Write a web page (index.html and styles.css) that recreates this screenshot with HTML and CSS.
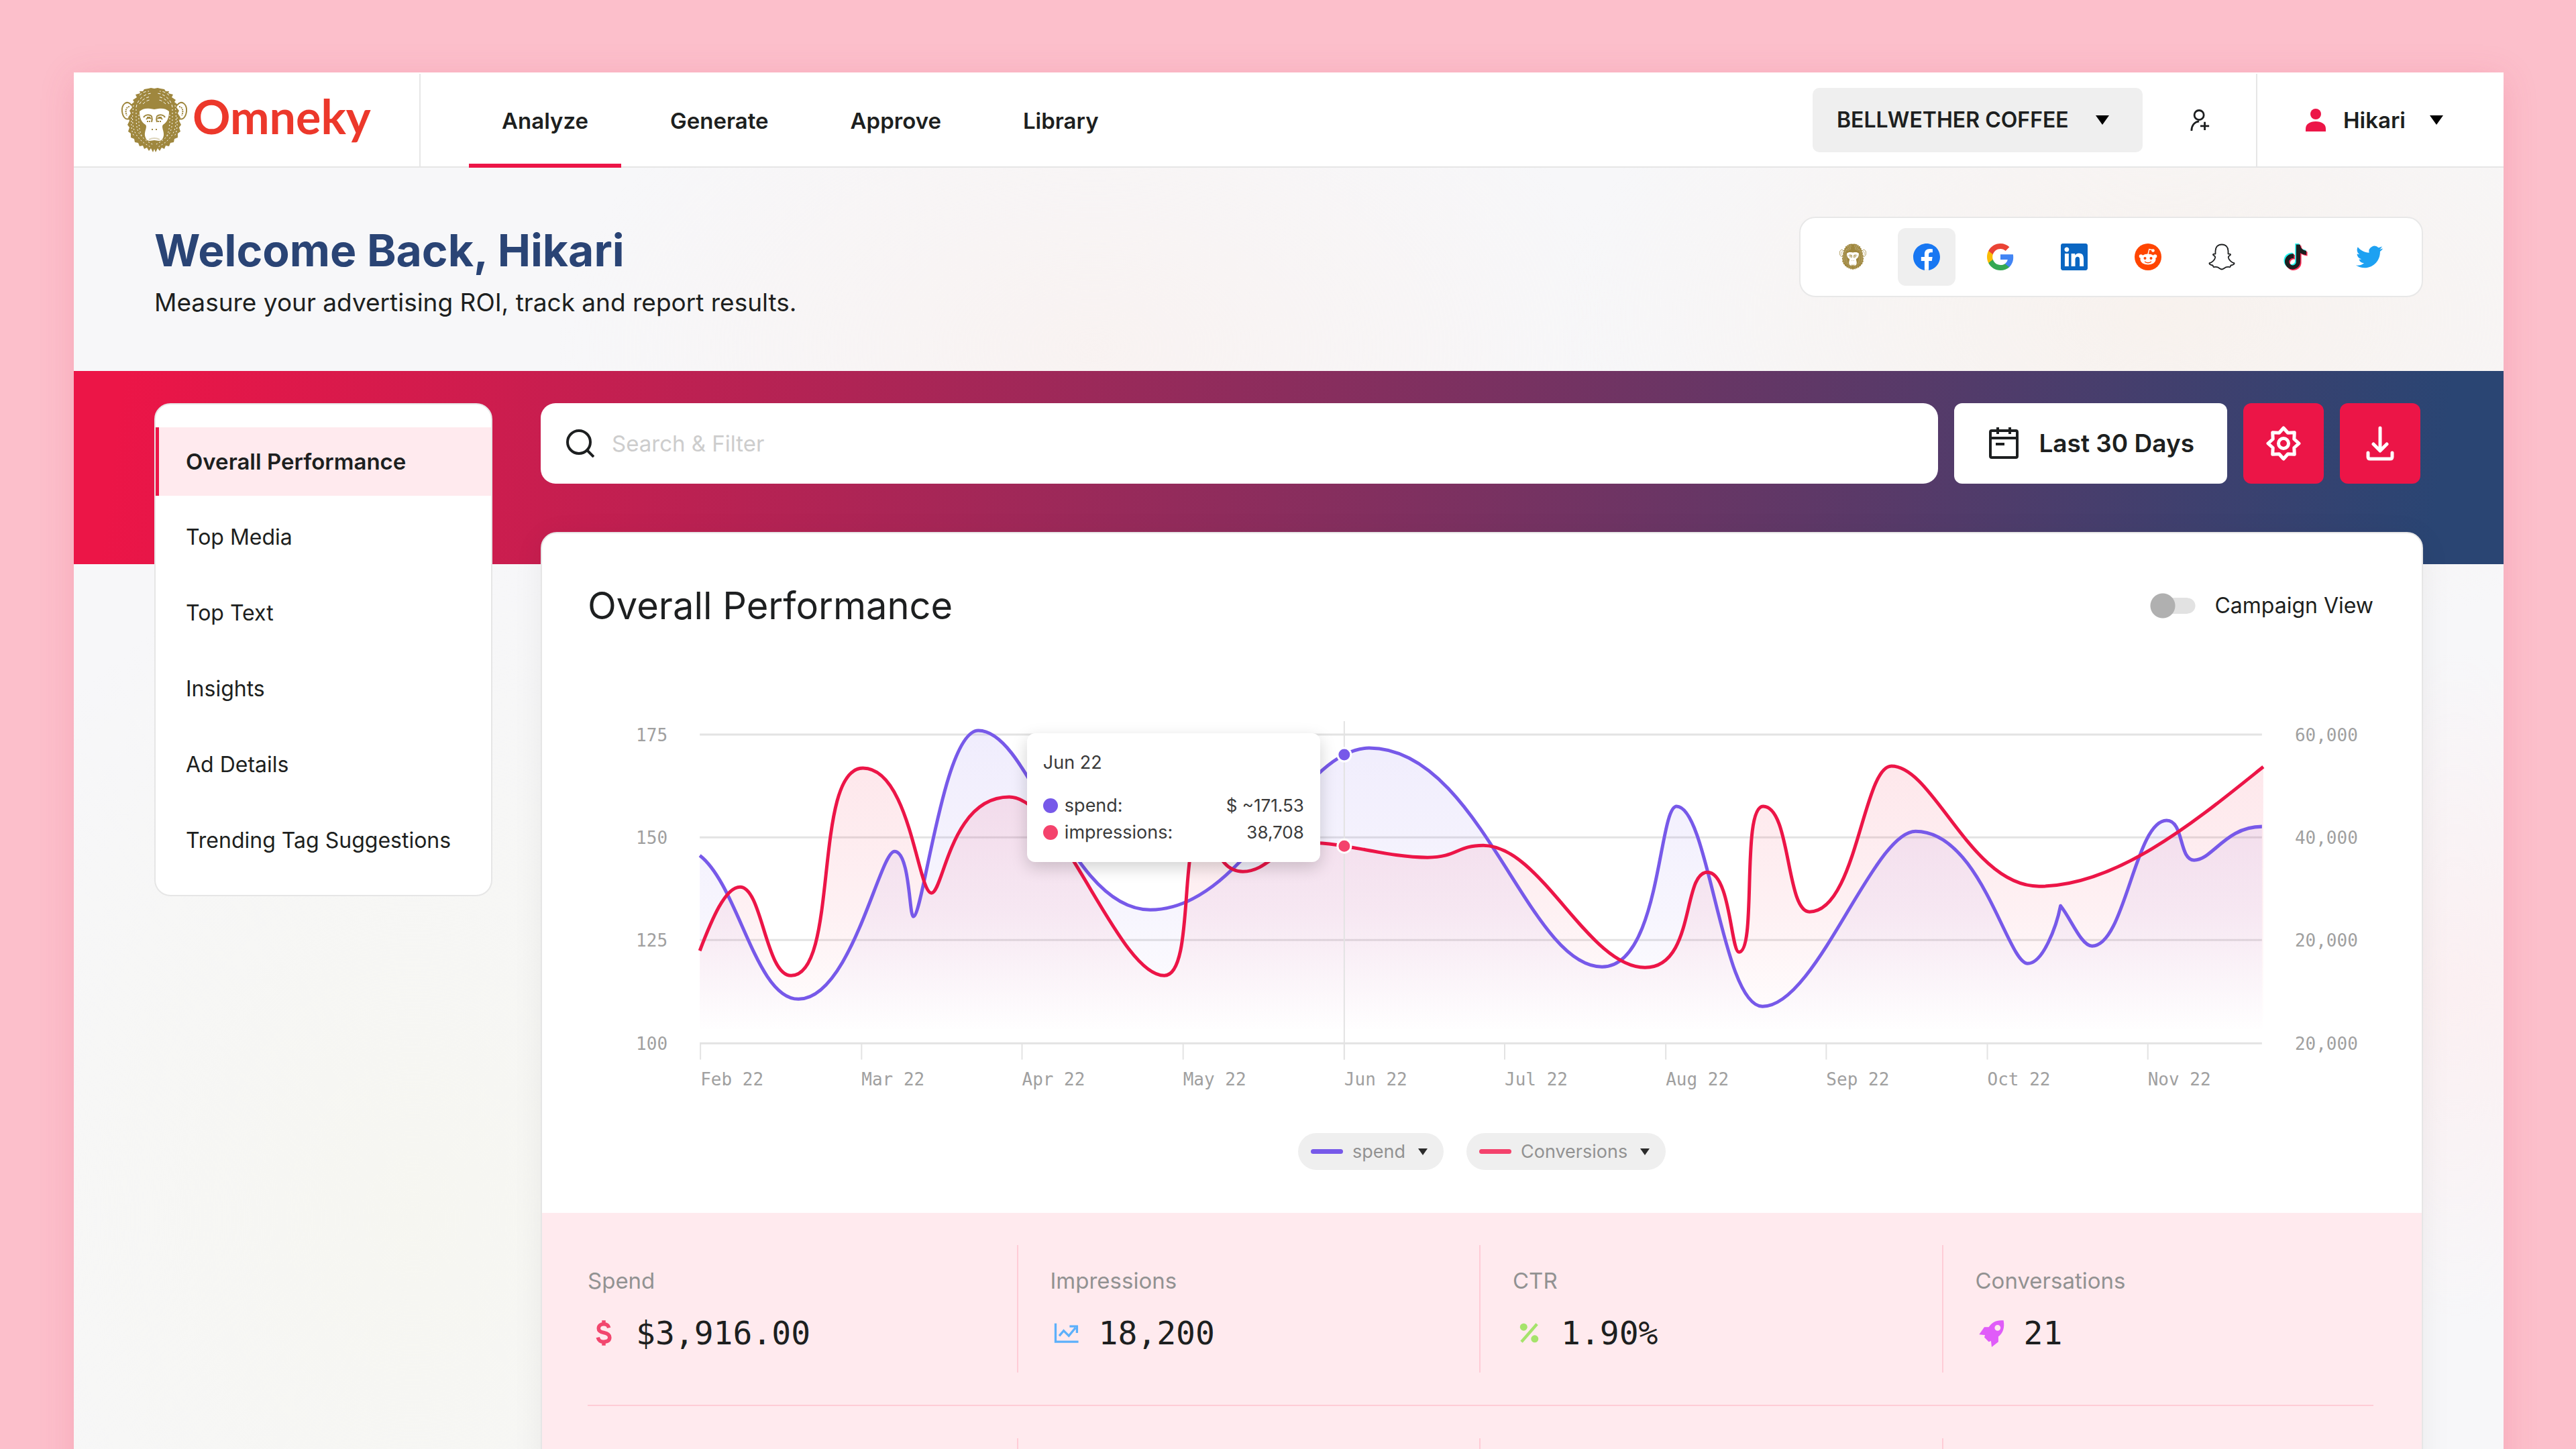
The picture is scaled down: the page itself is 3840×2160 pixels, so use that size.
FILE: index.html
```html
<!DOCTYPE html>
<html lang="en">
<head>
<meta charset="utf-8">
<title>Omneky – Analyze</title>
<link rel="stylesheet" href="styles.css">
</head>
<body>
<svg class="sprite" aria-hidden="true">
  <symbol id="monkey" viewBox="0 0 98 96">
    <g fill="none" stroke="#9f873e">
      <path stroke-width="2" d="M15 26C9 17 0 24 1 35c1 9 6 13 10 11M83 26c6-9 15-2 14 9-1 9-6 13-10 11"/>
      <path stroke-width="2" stroke-dasharray="2 1" d="M12 28c-5 0-7 7-4 13M86 28c5 0 7 7 4 13"/>
    </g>
    <path fill="#9f873e" d="M34 2L40 1 44 0 49 1 54 0 58 1 64 2 66 5 71 5 70 8 77 10 75 14 81 18 79 21 84 25 82 29 86 34 84 38 88 44 86 49 89 55 86 59 88 65 84 68 84 74 79 76 78 81 73 82 71 87 66 86 64 91 60 89 57 94 54 90 51 96 49 91 47 96 44 90 41 94 38 89 34 91 32 86 27 87 25 82 20 81 19 76 14 74 14 68 10 65 12 59 9 55 12 49 10 44 14 38 12 34 16 29 14 25 19 21 17 18 23 14 21 10 28 8 27 5 32 5z"/>
    <g fill="none" stroke="#fff" stroke-width="1">
      <path stroke-dasharray="4 3" d="M22 29C24 16 36 8 46 8M76 29C74 16 62 8 52 8M27 24c4-7 10-10 17-11M71 24c-4-7-10-10-17-11M32 24c4-4 8-6 11-6M66 24c-4-4-8-6-11-6M27 11c4-4 9-6 14-6M71 11c-4-4-9-6-14-6"/>
      <path stroke-dasharray="2 3" d="M18 26c-2 16-3 34 5 45s14 13 20 17M80 26c2 16 3 34-5 45s-14 13-20 17M22 32c0 14-1 30 6 38s14 12 20 15M76 32c0 14 1 30-6 38s-14 12-20 15M26 40c0 10-1 24 6 34M72 40c0 10 1 24-6 34M15 44c0 10-1 20 4 28M83 44c0 10 1 20-4 28"/>
    </g>
    <path fill="#fff" d="M27 35c4-4 10-5 16-4l6 1 6-1c6-1 12 0 16 4 0 8-2 16-9 20-3 3 2 10 1 16-1 5-3 8-7 8l-7-1-7 1c-4 0-6-3-7-8-1-6 4-13 1-16-7-4-9-12-9-20z"/>
    <g fill="none" stroke="#9f873e" stroke-width="2">
      <path d="M33 44c2-4 8-5 12-2M65 44c-2-4-8-5-12-2M37 47c2-3 5-3 7-1M61 47c-2-3-5-3-7-1M45 42c1 3 1 6 0 9M53 42c-1 3-1 6 0 9"/>
      <path d="M38 50l6 0M54 50l6 0" stroke-dasharray="2 1"/>
    </g>
    <path fill="#9f873e" d="M38 43h5v3h-5zM55 43h5v3h-5zM45 61h2v2h-2zM51 61h2v2h-2z"/>
    <path fill="none" stroke="#9f873e" stroke-opacity=".35" stroke-width="2" d="M41 77q8-4 16 0"/>
  </symbol>
  <symbol id="caret" viewBox="0 0 20 14"><path d="M0 0h20L10 14z"/></symbol>
</svg>

<div class="window">
  <header class="topbar">
    <a class="brand" href="#">
      <svg class="brand-mark" aria-hidden="true"><use href="#monkey"/></svg>
      <span>Omneky</span>
    </a>
    <nav class="nav">
      <a class="nav-link is-active" href="#">Analyze</a>
      <a class="nav-link" href="#">Generate</a>
      <a class="nav-link" href="#">Approve</a>
      <a class="nav-link" href="#">Library</a>
    </nav>
    <div class="account">
      <select aria-label="Brand"><option>BELLWETHER COFFEE</option></select>
      <svg class="caret" aria-hidden="true"><use href="#caret"/></svg>
    </div>
    <button class="invite" aria-label="Invite user">
      <svg viewBox="0 0 32 34" fill="none" stroke="#1d1f20" stroke-width="3"><circle cx="14" cy="9" r="7.500"/><path d="M2 34C2 25 7 20 14 19M23 20v13M16 26.500h14"/></svg>
    </button>
    <button class="user">
      <svg class="user-icon" viewBox="0 0 30 34" fill="#ec1547" aria-hidden="true"><circle cx="15" cy="8" r="8"/><path d="M0 34v-4C0 23 6 19 15 19s15 4 15 11v4z"/></svg>
      <span>Hikari</span>
      <svg class="caret" aria-hidden="true"><use href="#caret"/></svg>
    </button>
  </header>

  <section class="hero">
    <div>
      <h1>Welcome Back, Hikari</h1>
      <p>Measure your advertising ROI, track and report results.</p>
    </div>
    <div class="platforms">
      <button class="platform" aria-label="All platforms"><svg><use href="#monkey"/></svg></button>
      <button class="platform is-active" aria-label="Facebook"><svg viewBox="0 0 24 24"><circle cx="12" cy="12" r="11" fill="#fff"/><path fill="#1877f2" d="M24 12.073c0-6.627-5.373-12-12-12s-12 5.373-12 12c0 5.990 4.388 10.954 10.125 11.854v-8.385H7.078v-3.470h3.047V9.430c0-3.007 1.792-4.669 4.533-4.669 1.312 0 2.686.235 2.686.235v2.953H15.830c-1.491 0-1.956.925-1.956 1.874v2.250h3.328l-.532 3.470h-2.796v8.385C19.612 23.027 24 18.062 24 12.073z"/></svg></button>
      <button class="platform" aria-label="Google"><svg viewBox="2 2 44 44"><path fill="#4285f4" d="M45.120 24.500c0-1.560-.14-3.060-.4-4.500H24v8.510h11.840c-.51 2.750-2.060 5.080-4.390 6.640v5.520h7.110c4.160-3.830 6.560-9.470 6.560-16.170z"/><path fill="#34a853" d="M24 46c5.940 0 10.920-1.970 14.560-5.330l-7.110-5.520c-1.970 1.320-4.490 2.100-7.450 2.100-5.730 0-10.580-3.870-12.310-9.070H4.340v5.700C7.960 41.070 15.400 46 24 46z"/><path fill="#fbbc05" d="M11.690 28.180C11.250 26.860 11 25.450 11 24s.25-2.860.69-4.180v-5.700H4.340C2.850 17.090 2 20.450 2 24s.85 6.910 2.340 9.880l7.350-5.700z"/><path fill="#ea4335" d="M24 10.750c3.230 0 6.130 1.110 8.410 3.290l6.310-6.310C34.910 4.180 29.930 2 24 2 15.400 2 7.960 6.930 4.340 14.120l7.350 5.700c1.730-5.200 6.580-9.070 12.310-9.070z"/></svg></button>
      <button class="platform" aria-label="LinkedIn"><svg viewBox="0 0 24 24"><path fill="#0a66c2" d="M20.447 20.452h-3.554v-5.569c0-1.328-.027-3.037-1.852-3.037-1.853 0-2.136 1.445-2.136 2.939v5.667H9.351V9h3.414v1.561h.046c.477-.9 1.637-1.850 3.370-1.850 3.601 0 4.267 2.370 4.267 5.455v6.286zM5.337 7.433c-1.144 0-2.063-.926-2.063-2.065 0-1.138.92-2.063 2.063-2.063 1.140 0 2.064.925 2.064 2.063 0 1.139-.925 2.065-2.064 2.065zm1.782 13.019H3.555V9h3.564v11.452zM22.225 0H1.771C.792 0 0 .774 0 1.729v20.542C0 23.227.792 24 1.771 24h20.451C23.200 24 24 23.227 24 22.271V1.729C24 .774 23.200 0 22.222 0h.003z"/></svg></button>
      <button class="platform" aria-label="Reddit"><svg viewBox="0 0 40 40"><circle cx="20" cy="20" r="20" fill="#ff4500"/><g fill="#fff"><ellipse cx="20" cy="23.500" rx="11.500" ry="8"/><circle cx="9.500" cy="19" r="2.800"/><circle cx="30.500" cy="19" r="2.800"/><circle cx="27.500" cy="10.500" r="2.300"/></g><path fill="none" stroke="#fff" stroke-width="1.400" d="M20 16l1.800-7.500 5 1.200"/><circle cx="15.500" cy="22" r="2" fill="#ff4500"/><circle cx="24.500" cy="22" r="2" fill="#ff4500"/><path fill="none" stroke="#ff4500" stroke-width="1.400" d="M15 27q5 3.500 10 0"/></svg></button>
      <button class="platform" aria-label="Snapchat"><svg viewBox="0 0 40 40"><path fill="none" stroke="#1d1f20" stroke-width="1.800" stroke-linejoin="round" d="M20 1.500c-6 0-9.500 4-9.500 9.500v4.500c-1.500.6-3-.4-3.500.8-.6 1.500 3.500 2 3.300 4.200C9.800 24.500 5 28.500 1.500 29.200c-.6 2 3 3 5 3.300.6.900.3 2 1.300 2.500 1.500.3 3.700-.7 6 .3 2 1 3.500 3.200 6.200 3.200s4.200-2.200 6.200-3.200c2.300-1 4.500 0 6-.3 1-.5.7-1.600 1.300-2.500 2-.3 5.600-1.300 5-3.300-3.500-.7-8.300-4.700-8.800-8.700-.2-2.200 3.900-2.700 3.300-4.200-.5-1.200-2-.2-3.500-.8V11c0-5.500-3.500-9.500-9.500-9.500z"/></svg></button>
      <button class="platform" aria-label="TikTok"><svg viewBox="-1 -1 26 26"><defs><path id="note" d="M12.525.02c1.310-.02 2.610-.01 3.910-.02.08 1.530.63 3.090 1.750 4.170 1.120 1.110 2.700 1.620 4.240 1.790v4.030c-1.440-.05-2.890-.35-4.200-.97-.57-.26-1.100-.59-1.620-.93-.01 2.920.01 5.840-.02 8.750-.08 1.400-.54 2.790-1.350 3.940-1.310 1.920-3.580 3.170-5.910 3.210-1.430.08-2.860-.31-4.080-1.030-2.020-1.190-3.440-3.370-3.650-5.710-.02-.5-.03-1-.01-1.490.18-1.900 1.120-3.720 2.580-4.960 1.660-1.440 3.980-2.130 6.150-1.720.02 1.480-.04 2.960-.04 4.440-.99-.32-2.150-.23-3.020.37-.63.41-1.110 1.040-1.360 1.750-.21.51-.15 1.070-.14 1.610.24 1.640 1.820 3.020 3.500 2.870 1.120-.01 2.190-.66 2.770-1.610.19-.33.4-.67.41-1.060.1-1.790.06-3.570.07-5.360.01-4.030-.01-8.050.02-12.070z"/></defs><use href="#note" x="-1" y="-1" fill="#25f4ee"/><use href="#note" x="1" y="1" fill="#fe2c55"/><use href="#note" fill="#1d1f20"/></svg></button>
      <button class="platform" aria-label="Twitter"><svg viewBox="0 0 24 24"><path fill="#1da1f2" d="M23.953 4.570a10 10 0 01-2.825.775 4.958 4.958 0 002.163-2.723c-.951.555-2.005.959-3.127 1.184a4.920 4.920 0 00-8.384 4.482C7.690 8.095 4.067 6.130 1.640 3.162a4.822 4.822 0 00-.666 2.475c0 1.710.87 3.213 2.188 4.096a4.904 4.904 0 01-2.228-.616v.06a4.923 4.923 0 003.946 4.827 4.996 4.996 0 01-2.212.085 4.936 4.936 0 004.604 3.417 9.867 9.867 0 01-6.102 2.105c-.39 0-.779-.023-1.170-.067a13.995 13.995 0 007.557 2.209c9.053 0 13.998-7.496 13.998-13.985 0-.21 0-.42-.015-.63A9.935 9.935 0 0024 4.590z"/></svg></button>
    </div>
  </section>

  <main class="workspace">
    <nav class="side">
      <a class="side-link is-active" href="#">Overall Performance</a>
      <a class="side-link" href="#">Top Media</a>
      <a class="side-link" href="#">Top Text</a>
      <a class="side-link" href="#">Insights</a>
      <a class="side-link" href="#">Ad Details</a>
      <a class="side-link" href="#">Trending Tag Suggestions</a>
    </nav>

    <div class="content">
      <div class="toolbar">
        <label class="search">
          <svg viewBox="0 0 42 42" fill="none" stroke="#1d1f20" stroke-width="4" aria-hidden="true"><circle cx="19" cy="19" r="17"/><path d="M31 31l10 10"/></svg>
          <input type="search" placeholder="Search &amp; Filter" aria-label="Search and filter">
        </label>
        <button class="range">
          <svg viewBox="0 0 44 48" fill="none" stroke="#1d1f20" stroke-width="4" aria-hidden="true"><rect x="2" y="5" width="40" height="40" rx="2"/><path d="M2 16h40M13 0v10M31 0v10M10 25h13"/></svg>
          Last 30 Days
        </button>
        <button class="tool" aria-label="Settings">
          <svg viewBox="0 0 52 52" fill="none" stroke="#fff" stroke-width="5" stroke-linejoin="round"><path d="M26 3l6.500 7.200 9.800-.500-.5 9.800L49 26l-7.200 6.500.5 9.800-9.800-.5L26 49l-6.500-7.200-9.800.5.5-9.800L3 26l7.200-6.500-.5-9.800 9.800.5z"/><circle cx="26" cy="26" r="7.500"/></svg>
        </button>
        <button class="tool" aria-label="Download">
          <svg viewBox="0 0 52 52" fill="none" stroke="#fff" stroke-width="5" stroke-linecap="round" stroke-linejoin="round"><path d="M26 3v33M16 27l10 10 10-10M8 40v6c0 2 1 3 3 3h30c2 0 3-1 3-3v-6"/></svg>
        </button>
      </div>

      <section class="panel">
        <div class="panel-head">
          <h2>Overall Performance</h2>
          <label class="toggle"><input type="checkbox">Campaign View</label>
        </div>

        <div class="chart">
          <svg class="plot" viewBox="0 0 2660 580" role="img" aria-label="Spend and impressions by month">
            <defs>
              <linearGradient id="fillSpend" gradientUnits="userSpaceOnUse" x1="0" y1="30" x2="0" y2="480"><stop offset="0" stop-color="#7759e9" stop-opacity=".11"/><stop offset=".6" stop-color="#7759e9" stop-opacity=".06"/><stop offset="1" stop-color="#7759e9" stop-opacity="0"/></linearGradient>
              <linearGradient id="fillImpr" gradientUnits="userSpaceOnUse" x1="0" y1="30" x2="0" y2="480"><stop offset="0" stop-color="#f0143c" stop-opacity=".11"/><stop offset=".6" stop-color="#f0143c" stop-opacity=".06"/><stop offset="1" stop-color="#f0143c" stop-opacity="0"/></linearGradient>
              <path id="spend" d="M167 215C225 260 250 429 314 429C392 429 435 209 457 209C480 209 479 306 485 306C500 306 530 29 582 29C660 29 715 296 838 296C980 296 1060 55 1164 55C1330 55 1400 381 1511 381C1598 381 1595 142 1622 142C1670 142 1690 440 1750 440C1830 440 1915 179 1978 179C2075 179 2115 376 2145 376C2168 376 2188 320 2194 290C2210 310 2225 350 2241 350C2290 350 2305 163 2352 163C2378 163 2370 222 2393 222C2420 222 2440 172 2494 172"/>
              <path id="impressions" d="M167 357C185 310 205 262 227 262C260 262 265 394 303 394C375 394 335 85 410 85C480 85 492 271 512 271C530 271 540 128 628 128C705 128 790 394 859 394C905 394 880 180 915 180C935 180 935 239 976 239C1015 239 1030 196 1075 196C1130 196 1190 218 1251 218C1295 218 1295 200 1334 200C1420 200 1490 382 1575 382C1650 382 1630 240 1668 240C1702 240 1703 359 1715 359C1742 359 1718 142 1751 142C1792 142 1785 299 1820 299C1890 299 1900 82 1942 82C2005 82 2060 261 2162 261C2280 261 2400 160 2496 83"/>
              <clipPath id="area"><path d="M167 0H2494V495H167Z"/></clipPath>
            </defs>
            <path class="grid-line" d="M167 35H2494M167 188H2494M167 341H2494M167 495H2494"/>
            <path class="tick" d="M168 495v24M408 495v24M647 495v24M887 495v24M1127 495v24M1366 495v24M1606 495v24M1845 495v24M2085 495v24M2324 495v24"/>
            <g>
              <text x="72" y="45">175</text><text x="72" y="198">150</text><text x="72" y="351">125</text><text x="72" y="505">100</text>
            </g>
            <g>
              <text x="2543" y="45">60,000</text><text x="2543" y="198">40,000</text><text x="2543" y="351">20,000</text><text x="2543" y="505">20,000</text>
            </g>
            <g>
              <text x="168" y="558">Feb 22</text><text x="408" y="558">Mar 22</text><text x="647" y="558">Apr 22</text><text x="887" y="558">May 22</text><text x="1127" y="558">Jun 22</text><text x="1366" y="558">Jul 22</text><text x="1606" y="558">Aug 22</text><text x="1845" y="558">Sep 22</text><text x="2085" y="558">Oct 22</text><text x="2324" y="558">Nov 22</text>
            </g>
            <path fill="url(#fillSpend)" d="M167 215C225 260 250 429 314 429C392 429 435 209 457 209C480 209 479 306 485 306C500 306 530 29 582 29C660 29 715 296 838 296C980 296 1060 55 1164 55C1330 55 1400 381 1511 381C1598 381 1595 142 1622 142C1670 142 1690 440 1750 440C1830 440 1915 179 1978 179C2075 179 2115 376 2145 376C2168 376 2188 320 2194 290C2210 310 2225 350 2241 350C2290 350 2305 163 2352 163C2378 163 2370 222 2393 222C2420 222 2440 172 2494 172V495H167Z"/>
            <path fill="url(#fillImpr)" d="M167 357C185 310 205 262 227 262C260 262 265 394 303 394C375 394 335 85 410 85C480 85 492 271 512 271C530 271 540 128 628 128C705 128 790 394 859 394C905 394 880 180 915 180C935 180 935 239 976 239C1015 239 1030 196 1075 196C1130 196 1190 218 1251 218C1295 218 1295 200 1334 200C1420 200 1490 382 1575 382C1650 382 1630 240 1668 240C1702 240 1703 359 1715 359C1742 359 1718 142 1751 142C1792 142 1785 299 1820 299C1890 299 1900 82 1942 82C2005 82 2060 261 2162 261C2280 261 2400 160 2496 83V495H167Z"/>
            <path class="tick" d="M1127 15V519"/>
            <use href="#spend" class="line line-spend"/>
            <use href="#impressions" class="line line-impr"/>
            <circle class="mark" cx="1127" cy="65" r="10" fill="#7759e9"/>
            <circle class="mark" cx="1127" cy="201" r="10" fill="#f4426c"/>
          </svg>
          <div class="tooltip">
            <p>Jun 22</p>
            <div class="tip-row"><i class="dot dot-spend"></i><span>spend:</span><b>$ ~171.53</b></div>
            <div class="tip-row"><i class="dot dot-impr"></i><span>impressions:</span><b>38,708</b></div>
          </div>
        </div>

        <div class="legend">
          <label class="pill"><i class="swatch swatch-spend"></i><select aria-label="First series"><option>spend</option></select><svg class="caret-sm" aria-hidden="true"><use href="#caret"/></svg></label>
          <label class="pill"><i class="swatch swatch-impr"></i><select aria-label="Second series"><option>Conversions</option></select><svg class="caret-sm" aria-hidden="true"><use href="#caret"/></svg></label>
        </div>

        <div class="stats">
          <div class="stats-row">
            <div class="stat"><span>Spend</span><div class="value"><svg viewBox="0 0 40 40" fill="none" stroke="#f2476e" stroke-width="5" aria-hidden="true"><path d="M27 13c-1-4-4-5-7-5-4 0-7 2-7 6 0 3 2 4.500 7 5.500 5 1 8 2.500 8 6.500s-3 6-8 6-7-2-8-6M20 3v6M20 31v6"/></svg>$3,916.00</div></div>
            <div class="stat"><span>Impressions</span><div class="value"><svg viewBox="0 0 40 40" fill="none" stroke="#5cb0fb" stroke-width="3" aria-hidden="true"><path d="M5 7v25h31M10 24l6-7 7 7 9-11M24 11h10v9"/></svg>18,200</div></div>
            <div class="stat"><span>CTR</span><div class="value"><svg viewBox="0 0 40 40" aria-hidden="true"><circle cx="13" cy="12" r="5" fill="#a5e36b"/><circle cx="28" cy="28" r="5" fill="#a5e36b"/><path stroke="#a5e36b" stroke-width="4" d="M31 8L10 32"/></svg>1.90%</div></div>
            <div class="stat"><span>Conversations</span><div class="value"><svg viewBox="0 0 40 40" aria-hidden="true"><path fill="#e05cf9" fill-rule="evenodd" d="M36 3C26 2 20 6 16 12H10L3 22l8 1-1 3 6 6 3-1 1 8 9-7v-7c6-4 9-12 7-22zM28 9a4 4 0 1 1 0 8 4 4 0 0 1 0-8z"/></svg>21</div></div>
          </div>
          <div class="stats-row">
            <div class="stat"></div><div class="stat"></div><div class="stat"></div><div class="stat"></div>
          </div>
        </div>
      </section>
    </div>
  </main>
</div>
</body>
</html>
```
FILE: styles.css
```css
* { box-sizing: border-box; }

body {
  margin: 0;
  height: 100vh;
  overflow: hidden;
  padding: 108px 108px 0 110px;
  background: #fcbfcb;
  color: #1d1f20;
  font: 400 32px/48px "Inter", "Liberation Sans", sans-serif;
}

h1, h2, p { margin: 0; }
a { color: inherit; text-decoration: none; }
button, select, input { font: inherit; color: inherit; border: 0; background: none; padding: 0; margin: 0; }
select { appearance: none; outline: 0; }
button svg, .value svg, .search svg { display: block; flex: none; }

.sprite { position: absolute; width: 0; height: 0; }
.caret { width: 20px; height: 14px; flex: none; }
.caret-sm { width: 14px; height: 12px; flex: none; fill: #2b2b2b; }

.window {
  min-height: 100%;
  background:
    radial-gradient(ellipse 800px 500px at 42% 18%, rgba(250, 238, 234, .5), transparent),
    radial-gradient(ellipse 900px 500px at 86% 16%, rgba(248, 238, 230, .6), transparent),
    radial-gradient(ellipse 500px 500px at 98% 60%, rgba(252, 238, 240, .8), transparent),
    radial-gradient(ellipse 800px 1000px at 14% 75%, rgba(246, 246, 240, .9), transparent),
    #f7f7f9;
  box-shadow: 0 8px 48px rgba(220, 60, 100, .18);
}

.topbar {
  display: flex;
  align-items: center;
  height: 142px;
  padding-top: 2px;
  background: #fff;
  border-bottom: 2px solid #e6e6e6;
}
.brand {
  display: flex;
  align-self: stretch;
  align-items: center;
  gap: 8px;
  width: 517px;
  padding-left: 71px;
  border-right: 2px solid #e6e6e6;
  color: #ec382b;
  font: 700 70px/70px "Lato", sans-serif;
}
.brand span { padding-bottom: 12px; }
.brand-mark { width: 98px; height: 96px; }
.nav { display: flex; align-self: stretch; gap: 24px; margin: 0 auto 0 72px; font-size: 33px; }
.nav-link {
  display: flex;
  align-items: center;
  padding: 6px 49px 0;
  margin-bottom: -2px;
  border-bottom: 6px solid transparent;
  font-weight: 600;
}
.nav-link.is-active { border-color: #ec1547; }
.account {
  display: flex;
  align-items: center;
  gap: 40px;
  height: 96px;
  padding: 0 50px 0 36px;
  border-radius: 10px;
  background: #efefef;
  font-weight: 600;
}
.invite { margin: 0 68px 0 71px; }
.invite svg { width: 30px; height: 34px; }
.user {
  display: flex;
  align-self: stretch;
  align-items: center;
  gap: 26px;
  padding: 0 90px 0 72px;
  border-left: 2px solid #e6e6e6;
  font-size: 33px;
  font-weight: 600;
}
.user .caret { margin-left: 10px; }
.user-icon { width: 30px; height: 34px; }

.hero {
  display: flex;
  justify-content: space-between;
  align-items: flex-start;
  padding: 73px 120px 0;
  height: 303px;
}
.hero h1 { padding-top: 10px; color: #2a4475; font-size: 66px; line-height: 80px; font-weight: 700; }
.hero p { padding-top: 10px; font-size: 37px; line-height: 56px; }
.platforms {
  display: flex;
  gap: 24px;
  padding: 15px 35px;
  background: #fff;
  border: 2px solid #e8e8e8;
  border-radius: 24px;
}
.platform { display: grid; place-items: center; width: 86px; height: 86px; border-radius: 12px; }
.platform.is-active { background: #efefef; }
.platform svg { width: 40px; height: 40px; }

.workspace {
  display: grid;
  grid-template-columns: 504px minmax(0, 1fr);
  align-items: start;
  gap: 72px;
  padding: 48px 120px 0;
  background: linear-gradient(97deg, #ec1547 2%, #2a4573 97%) no-repeat 0 0 / 100% 288px;
}

.side {
  display: flex;
  flex-direction: column;
  gap: 11px;
  padding: 34px 0 30px;
  background: #fff;
  border: 2px solid #e6e6e6;
  border-radius: 24px;
}
.side-link { padding: 27px 40px; border-left: 5px solid transparent; }
.side-link.is-active { background: #ffeaee; border-color: #ec1547; font-size: 33px; font-weight: 600; }

.content { display: flex; flex-direction: column; gap: 72px; }
.toolbar { display: flex; gap: 24px; padding-right: 4px; }
.search {
  display: flex;
  flex: 1;
  align-items: center;
  gap: 26px;
  height: 120px;
  padding: 0 38px;
  background: #fff;
  border-radius: 22px;
  font-size: 33px;
}
.search svg { width: 42px; height: 42px; }
.search input { flex: 1; outline: 0; }
.search input::placeholder { color: #cdcdcd; opacity: 1; }
.range {
  display: flex;
  align-items: center;
  gap: 30px;
  padding: 0 49px 0 52px;
  background: #fff;
  border-radius: 12px;
  font-size: 37px;
  font-weight: 600;
}
.range svg { width: 44px; height: 48px; }
.tool { display: grid; place-items: center; width: 120px; border-radius: 12px; background: #ec1547; }
.tool svg { width: 52px; height: 52px; }

.panel {
  background: #fff;
  border: 2px solid #e6e6e6;
  border-radius: 24px;
  box-shadow: 0 8px 48px rgba(0, 0, 0, .06);
}
.panel-head { display: flex; justify-content: space-between; align-items: center; padding: 76px 72px 0 68px; }
.panel-head h2 { font-size: 56px; line-height: 64px; font-weight: 400; }
.toggle { display: flex; align-items: center; gap: 28px; }
.toggle input {
  appearance: none;
  width: 68px;
  height: 38px;
  background:
    radial-gradient(circle at 19px 19px, #b0b0b0 18px, transparent 19px),
    linear-gradient(#e2e2e2, #e2e2e2) no-repeat 20px 50% / 36px 24px,
    radial-gradient(circle at 56px 19px, #e2e2e2 11px, transparent 12px);
}

.chart { position: relative; margin: 125px 72px 0 68px; }
.plot { display: block; width: 100%; height: auto; }
.plot text { fill: #a0a0a0; font: 26px "DejaVu Sans Mono", monospace; }
.grid-line { stroke: #e3e3e3; stroke-width: 3; }
.tick { stroke: #e3e3e3; stroke-width: 2; }
.line { fill: none; stroke-width: 5; stroke-linejoin: round; }
.line-spend { stroke: #7759e9; }
.line-impr { stroke: #ec1547; }
.mark { stroke: #fff; stroke-width: 3; }
.tooltip {
  position: absolute;
  left: 24.6%;
  top: 33px;
  width: 437px;
  padding: 20px 24px 24px;
  background: #fff;
  border-radius: 12px;
  box-shadow: 0 8px 24px rgba(0, 0, 0, .18);
  color: #3a3a3a;
  font-size: 27px;
  line-height: 40px;
}
.tooltip p { padding: 4px 0 24px; }
.tip-row { display: flex; align-items: center; gap: 10px; }
.tip-row b { margin-left: auto; font-size: 26px; font-weight: 400; }
.dot { width: 22px; height: 22px; border-radius: 50%; }
.dot-spend, .swatch-spend { background: #7759e9; }
.dot-impr, .swatch-impr { background: #f4426c; }

.legend { display: flex; justify-content: center; gap: 34px; padding: 49px 0 64px; }
.pill {
  display: flex;
  align-items: center;
  gap: 14px;
  height: 55px;
  padding: 0 24px 0 19px;
  background: #efefef;
  border-radius: 28px;
  color: #929292;
  font-size: 27px;
}
.pill .caret-sm { margin-left: 4px; }
.swatch { width: 48px; height: 7px; border-radius: 4px; }

.stats { padding: 0 72px 0 68px; background: #ffeaee; }
.stats-row { display: grid; grid-template-columns: repeat(4, 1fr); gap: 96px; padding: 48px 0; }
.stats-row + .stats-row { border-top: 2px solid #ffccd6; }
.stat { min-height: 190px; padding-top: 29px; }
.stat + .stat { margin-left: -50px; padding-left: 48px; border-left: 2px solid #ffccd6; }
.stat span { color: #929292; font-size: 33px; line-height: 48px; }
.value {
  display: flex;
  align-items: center;
  gap: 26px;
  padding: 21px 0 0 2px;
  font: 48px/64px "DejaVu Sans Mono", monospace;
}
.value svg { width: 44px; height: 44px; }
```
